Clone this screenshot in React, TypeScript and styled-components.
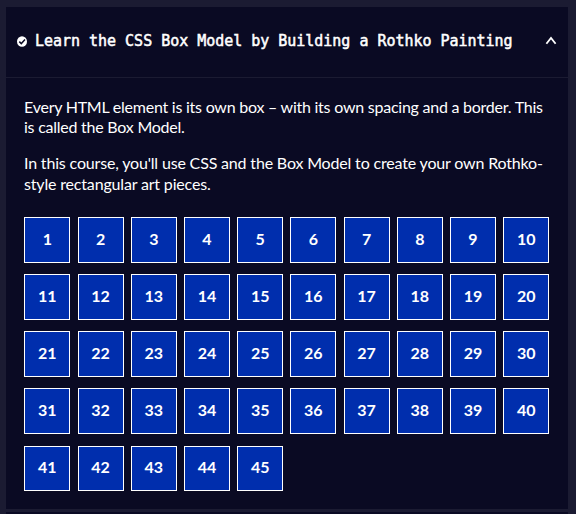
import React from 'react';
import styled, { createGlobalStyle } from 'styled-components';

const GlobalStyle = createGlobalStyle`
  * { box-sizing: border-box; }
  body { margin: 0; background: #1b1b32; overflow: hidden; }
`;

const Page = styled.main`
  display: flex;
  flex-direction: column;
  gap: 3px;
  height: 514px;
  padding: 7px 8px 0 6px;
  background: #1b1b32;
  color: #fff;
  font-family: Lato, sans-serif;
`;

const Block = styled.section`
  flex: none;
  height: 502px;
  background: #0a0a23;
`;

const NextBlock = styled.section`
  flex: 1;
  background: #0a0a23;
`;

const Header = styled.button`
  display: flex;
  align-items: center;
  width: 100%;
  height: 71px;
  padding: 0 11px;
  border: 0;
  border-bottom: 1px solid #1b1b32;
  background: transparent;
  color: inherit;
  text-align: left;
`;

const Title = styled.span`
  flex: 1;
  margin: 0 0 2px 8px;
  font: 15px/20px 'DejaVu Sans Mono', monospace;
  letter-spacing: -0.02px;
  -webkit-text-stroke: 0.5px #fff;
  white-space: nowrap;
`;

const CheckIcon = styled.svg`
  flex: none;
  width: 10px;
  height: 11px;
  margin-bottom: 2px;
`;

const Chevron = styled.svg`
  flex: none;
  width: 12px;
  height: 9px;
  margin-bottom: 3px;
`;

const Intro = styled.div`
  height: 139px;
  padding: 19px 18px 0;
`;

const Paragraph = styled.p<{ $tracking: number; $leading: number }>`
  margin: 0;
  font-size: 16px;
  line-height: ${({ $leading }) => $leading}px;
  letter-spacing: ${({ $tracking }) => $tracking}px;
  white-space: nowrap;

  & + & {
    margin-top: 15px;
  }
`;

const Steps = styled.ol`
  display: grid;
  grid-template-columns: repeat(10, 45.95px);
  column-gap: 7.27px;
  row-gap: 11.45px;
  margin: 0;
  padding: 0 18px 0 18.4px;
  list-style: none;
`;

const Step = styled.li`
  display: flex;
  align-items: center;
  justify-content: center;
  height: 45.7px;
  padding-bottom: 2.4px;
  border: 1px solid #fff;
  background: #002ead;
  font-size: 16px;
  font-weight: 700;
  line-height: 20px;
`;

const steps = Array.from({ length: 45 }, (_, i) => i + 1);

export default function App() {
  return (
    <>
      <GlobalStyle />
      <Page>
        <Block>
          <Header aria-expanded="true">
            <CheckIcon viewBox="0 0 10 11">
              <ellipse cx="5" cy="5.5" rx="5" ry="5.3" fill="#fff" />
              <path d="M2.3 5.6 4.3 7.6 8 3.6" fill="none" stroke="#0a0a23" strokeWidth="1.5" />
            </CheckIcon>
            <Title>Learn the CSS Box Model by Building a Rothko Painting</Title>
            <Chevron viewBox="0 0 12 9">
              <path d="M1.4 7.8 6 2 10.6 7.8" fill="none" stroke="#fff" strokeWidth="1.8" />
            </Chevron>
          </Header>
          <Intro>
            <Paragraph $tracking={-0.24} $leading={20}>
              Every HTML element is its own box – with its own spacing and a border. This
              <br />
              is called the Box Model.
            </Paragraph>
            <Paragraph $tracking={-0.17} $leading={21}>
              In this course, you'll use CSS and the Box Model to create your own Rothko-
              <br />
              style rectangular art pieces.
            </Paragraph>
          </Intro>
          <Steps>
            {steps.map((n) => (
              <Step key={n}>{n}</Step>
            ))}
          </Steps>
        </Block>
        <NextBlock />
      </Page>
    </>
  );
}
